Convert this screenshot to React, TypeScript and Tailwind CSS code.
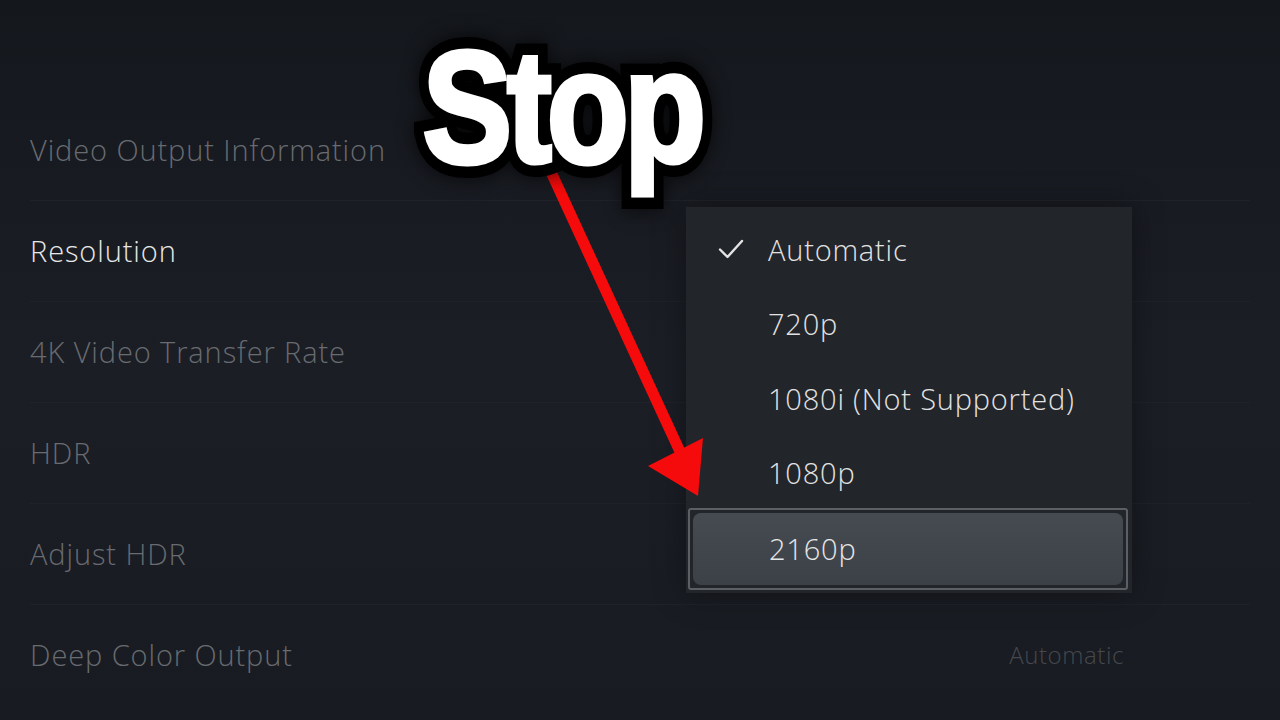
import React from "react";

const rows = [
  { label: "Video Output Information", active: false, value: "" },
  { label: "Resolution", active: true, value: "" },
  { label: "4K Video Transfer Rate", active: false, value: "" },
  { label: "HDR", active: false, value: "" },
  { label: "Adjust HDR", active: false, value: "" },
  { label: "Deep Color Output", active: false, value: "Automatic" },
];

const options = ["Automatic", "720p", "1080i (Not Supported)", "1080p", "2160p"];

function Check() {
  return (
    <svg width="26" height="22" viewBox="0 0 26 22" fill="none">
      <path d="M2 11.5 L9.5 19 L24 3" stroke="#e4e4e4" strokeWidth="2.4" strokeLinecap="round" strokeLinejoin="round" />
    </svg>
  );
}

export default function App() {
  return (
    <div
      className="relative w-[1280px] h-[720px] overflow-hidden bg-gradient-to-b from-[#14171c] via-[#1b1e25] to-[#181b21]"
      style={{ fontFamily: '"Open Sans", "Noto Sans", sans-serif' }}
    >
      {/* settings list */}
      <div className="flex flex-col pt-[100px] px-[30px]">
        {rows.map((r, i) => (
          <div
            key={r.label}
            className={
              "flex items-center justify-between h-[101px] pb-[1px] " +
              (i < rows.length - 1 ? "border-b border-[#1f2228]" : "")
            }
          >
            <span
              className={
                "text-[29px] font-light tracking-[0.9px] " +
                (r.active ? "text-[#e8e8e8]" : "text-[#686b70]")
              }
            >
              {r.label}
            </span>
            {r.value && (
              <span className="text-[24px] font-light tracking-[0.6px] text-[#45484e] mr-[126px]">{r.value}</span>
            )}
          </div>
        ))}
      </div>

      {/* resolution dropdown */}
      <div className="absolute left-[686px] top-[207px] w-[446px] h-[386px] bg-[#22252a] shadow-[0_0_30px_rgba(0,0,0,0.35)] flex flex-col pt-[5px] px-[2px]">
        {options.map((o, i) => {
          const selected = i === options.length - 1;
          if (selected) {
            return (
              <div
                key={o}
                className="-mt-[2px] h-[82px] border-2 border-[#5c5f64] rounded-[3px] p-[3px] mr-[2px]"
              >
                <div className="h-full rounded-[8px] bg-gradient-to-b from-[#464b52] to-[#3c4148] flex items-center pl-[76px]">
                  <span className="text-[29px] font-light tracking-[0.8px] text-[#e6e6e6]">{o}</span>
                </div>
              </div>
            );
          }
          return (
            <div key={o} className="h-[74.5px] shrink-0 flex items-center">
              <div className="w-[80px] flex justify-end pr-[24px]">{i === 0 && <Check />}</div>
              <span className="text-[29px] font-light tracking-[0.8px] text-[#e2e2e2]">{o}</span>
            </div>
          );
        })}
      </div>

      {/* red pointer */}
      <svg className="absolute left-0 top-0" width="1280" height="720" viewBox="0 0 1280 720">
        <line x1="551" y1="172" x2="682" y2="456" stroke="#f50b0b" strokeWidth="11" />
        <polygon points="648,466 703,438 698,496" fill="#f50b0b" />
      </svg>

      {/* caption: black outline layer with the white face on top */}
      <div className="absolute left-[362px] top-[27px] w-[400px] flex justify-center">
        <div className="relative scale-x-[0.84]" style={{ fontFamily: '"Liberation Sans", Arial, sans-serif' }}>
          <span className="block font-bold leading-none text-[160px] tracking-[-6px] text-black [-webkit-text-stroke:28px_#000] drop-shadow-[0_0_10px_rgba(0,0,0,0.7)]">
            Stop
          </span>
          <span className="absolute left-0 top-0 block font-bold leading-none text-[160px] tracking-[-6px] text-white [-webkit-text-stroke:5px_#fff]">
            Stop
          </span>
        </div>
      </div>
    </div>
  );
}
